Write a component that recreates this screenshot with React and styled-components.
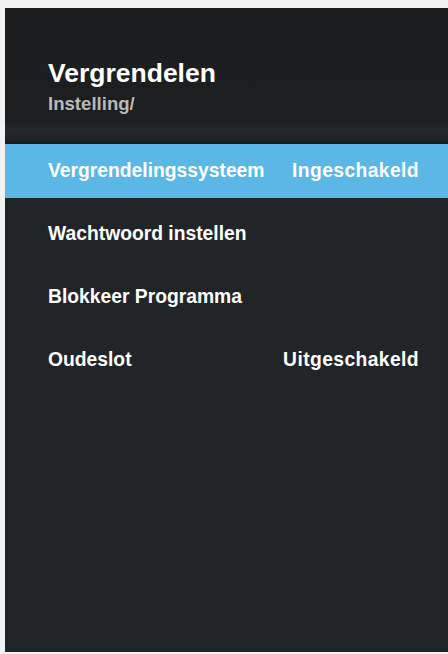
import React from "react";
import styled, { createGlobalStyle } from "styled-components";

const GlobalStyle = createGlobalStyle`
  html, body {
    margin: 0;
    padding: 0;
    background: #f2f2f2;
  }
  body {
    font-family: "Liberation Sans", Arial, Helvetica, sans-serif;
  }
`;

const Screen = styled.div`
  width: 448px;
  height: 654px;
  padding: 8px 0 2px 5px;
  box-sizing: border-box;
  background: #f2f2f2;
  display: flex;
`;

const Panel = styled.div`
  flex: 1;
  display: flex;
  flex-direction: column;
  background: #222527;
`;

const Header = styled.div`
  height: 136px;
  box-sizing: border-box;
  padding: 50px 0 0 43px;
  background: linear-gradient(
    to bottom,
    #1b1d1f 0%,
    #1c1e20 82%,
    #25292b 90%,
    #202325 97%,
    #15181a 100%
  );
`;

const Title = styled.div`
  color: #ffffff;
  font-size: 26.5px;
  font-weight: 700;
  line-height: 30px;
`;

const Crumb = styled.div`
  margin-top: 5px;
  color: #b9b9b9;
  font-size: 18.6px;
  font-weight: 700;
  line-height: 21px;
`;

const List = styled.div`
  display: flex;
  flex-direction: column;
  gap: 9px;
`;

const Row = styled.div`
  height: 54px;
  display: flex;
  align-items: center;
  justify-content: space-between;
  padding: 0 29px 0 43px;
  background: ${(p) => (p.$active ? "#5bb7e5" : "transparent")};
  color: #ffffff;
  font-size: 19.3px;
  font-weight: 700;
`;

const Value = styled.span`
  text-align: right;
  letter-spacing: 0.4px;
`;

const items = [
  { label: "Vergrendelingssysteem", value: "Ingeschakeld", active: true },
  { label: "Wachtwoord instellen" },
  { label: "Blokkeer Programma" },
  { label: "Oudeslot", value: "Uitgeschakeld" },
];

export default function App() {
  return (
    <>
      <GlobalStyle />
      <Screen>
        <Panel>
          <Header>
            <Title>Vergrendelen</Title>
            <Crumb>Instelling/</Crumb>
          </Header>
          <List>
            {items.map((it) => (
              <Row key={it.label} $active={it.active}>
                <span>{it.label}</span>
                {it.value && <Value>{it.value}</Value>}
              </Row>
            ))}
          </List>
        </Panel>
      </Screen>
    </>
  );
}
